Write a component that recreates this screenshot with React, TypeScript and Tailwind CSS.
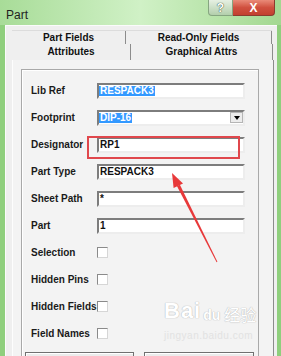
import React from 'react';

const font = "font-['Liberation_Sans','Arial',sans-serif]";

function TextField({ value, selected, dropdown }: { value: string; selected?: boolean; dropdown?: boolean }) {
  return (
    <div className="w-[148px] h-[16px] bg-white border-2 border-t-[#7d7d7d] border-l-[#7d7d7d] border-r-[#ededed] border-b-[#ededed] flex items-center">
      <span className={`leading-[10px] text-[10px] font-bold pl-[1px] ${selected ? 'bg-[#3399ff] text-white pr-[1px]' : 'text-[#111]'}`}>
        {value}
      </span>
      {dropdown && (
        <div className="ml-auto w-[13px] h-[11px] bg-[#ececec] border border-[#b5b5b5] flex items-center justify-center">
          <div className="w-0 h-0 border-l-[3px] border-r-[3px] border-t-[4px] border-l-transparent border-r-transparent border-t-black" />
        </div>
      )}
    </div>
  );
}

function CheckBox() {
  return <div className="w-[11px] h-[11px] bg-white border border-t-[#8a8a8a] border-l-[#8a8a8a] border-r-[#d6d6d6] border-b-[#d6d6d6]" />;
}

function Row({ label, children }: { label: string; children: React.ReactNode }) {
  return (
    <div className="h-[27px] flex items-center">
      <span className="w-[66px] shrink-0 text-[10px] font-bold text-[#1a1a1a] whitespace-nowrap">{label}</span>
      {children}
    </div>
  );
}

export default function App() {
  const fields = [
    { label: 'Lib Ref', value: 'RESPACK3', selected: true },
    { label: 'Footprint', value: 'DIP-16', selected: true, dropdown: true },
    { label: 'Designator', value: 'RP1' },
    { label: 'Part Type', value: 'RESPACK3' },
    { label: 'Sheet Path', value: '*' },
    { label: 'Part', value: '1' },
  ];
  const checks = ['Selection', 'Hidden Pins', 'Hidden Fields', 'Field Names'];

  return (
    <div className={`relative w-[281px] h-[356px] overflow-hidden flex flex-col bg-[#8fcf7d] ${font}`}>
      {/* title bar */}
      <div className="h-[25px] shrink-0 flex items-start justify-between bg-gradient-to-r from-[#a8dc98] via-[#d0f1c6] to-[#a3d891]">
        <span className="mt-[6px] ml-[6px] text-[12px] text-[#1f1f1f]">Part</span>
        <div className="flex mr-[6px]">
          <div className="w-[25px] h-[16px] rounded-bl-[4px] border border-t-0 border-[#86a581] bg-gradient-to-b from-[#e6f0e3] to-[#b3cfac] flex items-center justify-center text-[12px] font-bold text-white [text-shadow:0_0_1px_#35533a,0_0_1px_#35533a]">
            ?
          </div>
          <div className="w-[42px] h-[16px] rounded-br-[4px] border border-t-0 border-l-0 border-[#8b3b2f] bg-gradient-to-b from-[#e98a78] via-[#d0503f] to-[#c2402f] flex items-center justify-center text-[12px] font-bold text-white">
            X
          </div>
        </div>
      </div>

      {/* dialog body */}
      <div className="flex-1 ml-[5px] w-[272px] bg-[#efefef] border-l border-t border-[#fbfbfb] pt-[4px] pl-[6px]">
        {/* tab rows */}
        <div className="w-[260px] h-[14px] flex border-t border-[#dcdcdc] text-[10px] font-bold text-[#111]">
          <div className="w-[114px] flex items-center justify-center border-r border-[#8c8c8c]">Part Fields</div>
          <div className="w-[146px] flex items-center justify-center border-r border-[#8c8c8c]">Read-Only Fields</div>
        </div>
        <div className="w-[261px] h-[16px] flex text-[10px] font-bold text-[#111]">
          <div className="w-[119px] flex items-center justify-center border-r border-[#8c8c8c] pb-[1px]">Attributes</div>
          <div className="w-[142px] flex items-center justify-center border-r border-[#8c8c8c] pb-[1px]">Graphical Attrs</div>
        </div>

        {/* tab page */}
        <div className="w-[262px] h-[400px] bg-[#f3f3f3] border-l border-[#fdfdfd] border-r border-r-[#8c8c8c] pt-[9px] pl-[8px]">
          <div className="w-[238px] h-[380px] border border-[#a9a9a9] shadow-[inset_1px_1px_0_#ffffff] pt-[7px] pl-[9px]">
            {fields.map((f) => (
              <Row key={f.label} label={f.label}>
                <TextField value={f.value} selected={f.selected} dropdown={f.dropdown} />
              </Row>
            ))}
            {checks.map((c) => (
              <Row key={c} label={c}>
                <CheckBox />
              </Row>
            ))}
            <div className="flex gap-[10px] mt-[5px] -ml-[6px]">
              <div className="w-[109px] h-[20px] border border-[#707070] bg-[#ececec] shadow-[inset_1px_1px_0_#ffffff]" />
              <div className="w-[110px] h-[20px] border border-[#707070] bg-[#ececec] shadow-[inset_1px_1px_0_#ffffff]" />
            </div>
          </div>
        </div>
      </div>

      {/* annotation: red box around Designator */}
      <div className="absolute left-[87px] top-[136px] w-[153px] h-[23px] border-2 border-[#e0474c] pointer-events-none" />

      {/* annotation: red arrow */}
      <svg className="absolute inset-0 pointer-events-none" width="281" height="356" viewBox="0 0 281 356">
        <polygon points="172,173 173.6,188 183,183.4" fill="#e8393a" />
        <polygon points="176.9,186 179.9,184.8 217.4,261.8 216.6,262.2" fill="#e8393a" />
      </svg>

      {/* watermark */}
      <div className="absolute left-[164px] top-[300px] pointer-events-none flex flex-col text-white">
        <div className="flex items-end gap-[2px] leading-none [text-shadow:0_0_1px_#b9b9b9,0_0_1px_#b9b9b9]">
          <span className="text-[22px] font-bold tracking-[1px]">Bai</span>
          <span className="text-[14px] font-bold">du</span>
          <span className="text-[16px] ml-[2px] font-['Noto_Sans_CJK_SC',sans-serif]">经验</span>
        </div>
        <span className="text-[10px] mt-[6px] tracking-[0.5px] text-[#e2e2e2]">jingyan.baidu.com</span>
      </div>
    </div>
  );
}
